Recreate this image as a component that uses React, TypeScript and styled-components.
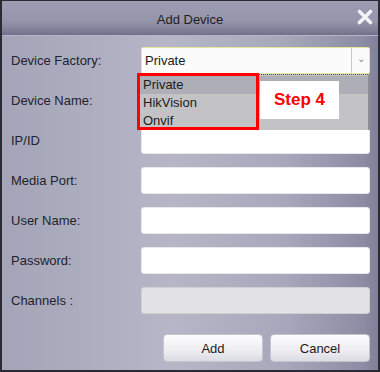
import React from "react";
import styled, { createGlobalStyle } from "styled-components";

const GlobalStyle = createGlobalStyle`
  html, body {
    margin: 0;
    padding: 0;
    background: #fff;
  }
  body {
    font-family: "Liberation Sans", Arial, sans-serif;
  }
`;

const fields = ["Device Name:", "IP/ID", "Media Port:", "User Name:", "Password:"];
const factories = ["Private", "HikVision", "Onvif"];

export default function App() {
  return (
    <>
      <GlobalStyle />
      <Dialog>
        <TitleBar>
          <Title>Add Device</Title>
          <Close width="16" height="16" viewBox="0 0 16 16">
            <path d="M2.5 2.5 L13.5 13.5 M13.5 2.5 L2.5 13.5" stroke="#f2f2f6" strokeWidth="3.6" strokeLinecap="round" />
          </Close>
        </TitleBar>
        <Body>
          <Row>
            <Label>Device Factory:</Label>
            <SelectWrap>
              <Select>
                <span>Private</span>
                <Arrow>⌄</Arrow>
              </Select>
              <Dropdown>
                {factories.map((f, i) => (
                  <Option key={f} $active={i === 0}>
                    {f}
                  </Option>
                ))}
              </Dropdown>
              <StepBox />
              <StepLabel>Step 4</StepLabel>
            </SelectWrap>
          </Row>
          {fields.map((f) => (
            <Row key={f}>
              <Label>{f}</Label>
              <Input />
            </Row>
          ))}
          <Row>
            <Label>Channels :</Label>
            <Input $disabled />
          </Row>
          <Buttons>
            <Button>Add</Button>
            <Button>Cancel</Button>
          </Buttons>
        </Body>
      </Dialog>
    </>
  );
}

const Dialog = styled.div`
  width: 380px;
  height: 372px;
  box-sizing: border-box;
  border: 2px solid #2a2a34;
  border-top-width: 1px;
  display: flex;
  flex-direction: column;
  overflow: hidden;
  background: linear-gradient(90deg, #a4a4b8 0%, #b6b6c8 45%, #a8a8bc 75%, #8c8ca4 96%, #80809a 100%);
`;

const TitleBar = styled.div`
  height: 34px;
  flex: none;
  position: relative;
  display: flex;
  align-items: center;
  justify-content: center;
  background: linear-gradient(180deg, #9c9cb2 0%, #9494aa 60%, #7c7c94 90%, #70708a 100%);
  border-bottom: 1px solid #b4b4c6;
`;

const Title = styled.div`
  font-size: 13px;
  color: #1e1e24;
  margin-top: 2px;
`;

const Close = styled.svg`
  position: absolute;
  right: 5px;
  top: 8px;
`;

const Body = styled.div`
  position: relative;
  flex: 1;
  padding: 11px 9px 0 9px;
  display: flex;
  flex-direction: column;
  gap: 13px;
`;

const Row = styled.div`
  display: grid;
  grid-template-columns: 130px 229px;
  align-items: center;
  height: 27px;
`;

const Label = styled.div`
  font-size: 13px;
  color: #23232a;
`;

const SelectWrap = styled.div`
  position: relative;
  height: 27px;
`;

const Select = styled.div`
  height: 27px;
  box-sizing: border-box;
  border: 1px solid #e6e69a;
  border-radius: 2px;
  background: #fbfbfb;
  display: flex;
  align-items: center;
  padding-left: 3px;
  font-size: 13px;
  color: #1c1c1c;
`;

const Arrow = styled.div`
  margin-left: auto;
  width: 18px;
  height: 100%;
  border-left: 1px solid #c8c8c8;
  display: flex;
  justify-content: center;
  align-items: center;
  font-size: 10px;
  color: #888;
  box-sizing: border-box;
  padding-bottom: 4px;
`;

const Dropdown = styled.div`
  position: absolute;
  top: 27px;
  left: -2px;
  width: 231px;
  height: 56px;
  box-sizing: border-box;
  background: #c3c3c5;
  border-top: 1px dotted #555;
  border-right: 2px solid #8e8e96;
  padding-top: 1px;
  z-index: 2;
`;

const Option = styled.div<{ $active?: boolean }>`
  height: 18px;
  line-height: 18px;
  padding-left: 4px;
  font-size: 13px;
  color: #1c1c1c;
  background: ${(p) => (p.$active ? "#aeaeb6" : "transparent")};
`;

const StepBox = styled.div`
  position: absolute;
  top: 26px;
  left: -4px;
  width: 122px;
  height: 57px;
  box-sizing: border-box;
  border: 3px solid #ff0000;
  z-index: 3;
`;

const StepLabel = styled.div`
  position: absolute;
  top: 34px;
  left: 119px;
  width: 79px;
  height: 38px;
  background: #fff;
  color: #ff0000;
  font-weight: bold;
  font-size: 17px;
  display: flex;
  align-items: center;
  justify-content: center;
  z-index: 3;
`;

const Input = styled.div<{ $disabled?: boolean }>`
  height: 27px;
  box-sizing: border-box;
  border-radius: 3px;
  background: ${(p) => (p.$disabled ? "#e2e2e4" : "#ffffff")};
  border: 1px solid ${(p) => (p.$disabled ? "#d0d0d4" : "#e8e8ee")};
`;

const Buttons = styled.div`
  display: flex;
  justify-content: flex-end;
  gap: 7px;
  margin-top: 7px;
  width: 359px;
`;

const Button = styled.div`
  width: 100px;
  height: 28px;
  box-sizing: border-box;
  border-radius: 4px;
  border: 1px solid #c4c4cc;
  background: linear-gradient(180deg, #fdfdfe 0%, #f0f0f4 50%, #dcdce4 100%);
  display: flex;
  align-items: center;
  justify-content: center;
  font-size: 13px;
  color: #1c1c1c;
`;
